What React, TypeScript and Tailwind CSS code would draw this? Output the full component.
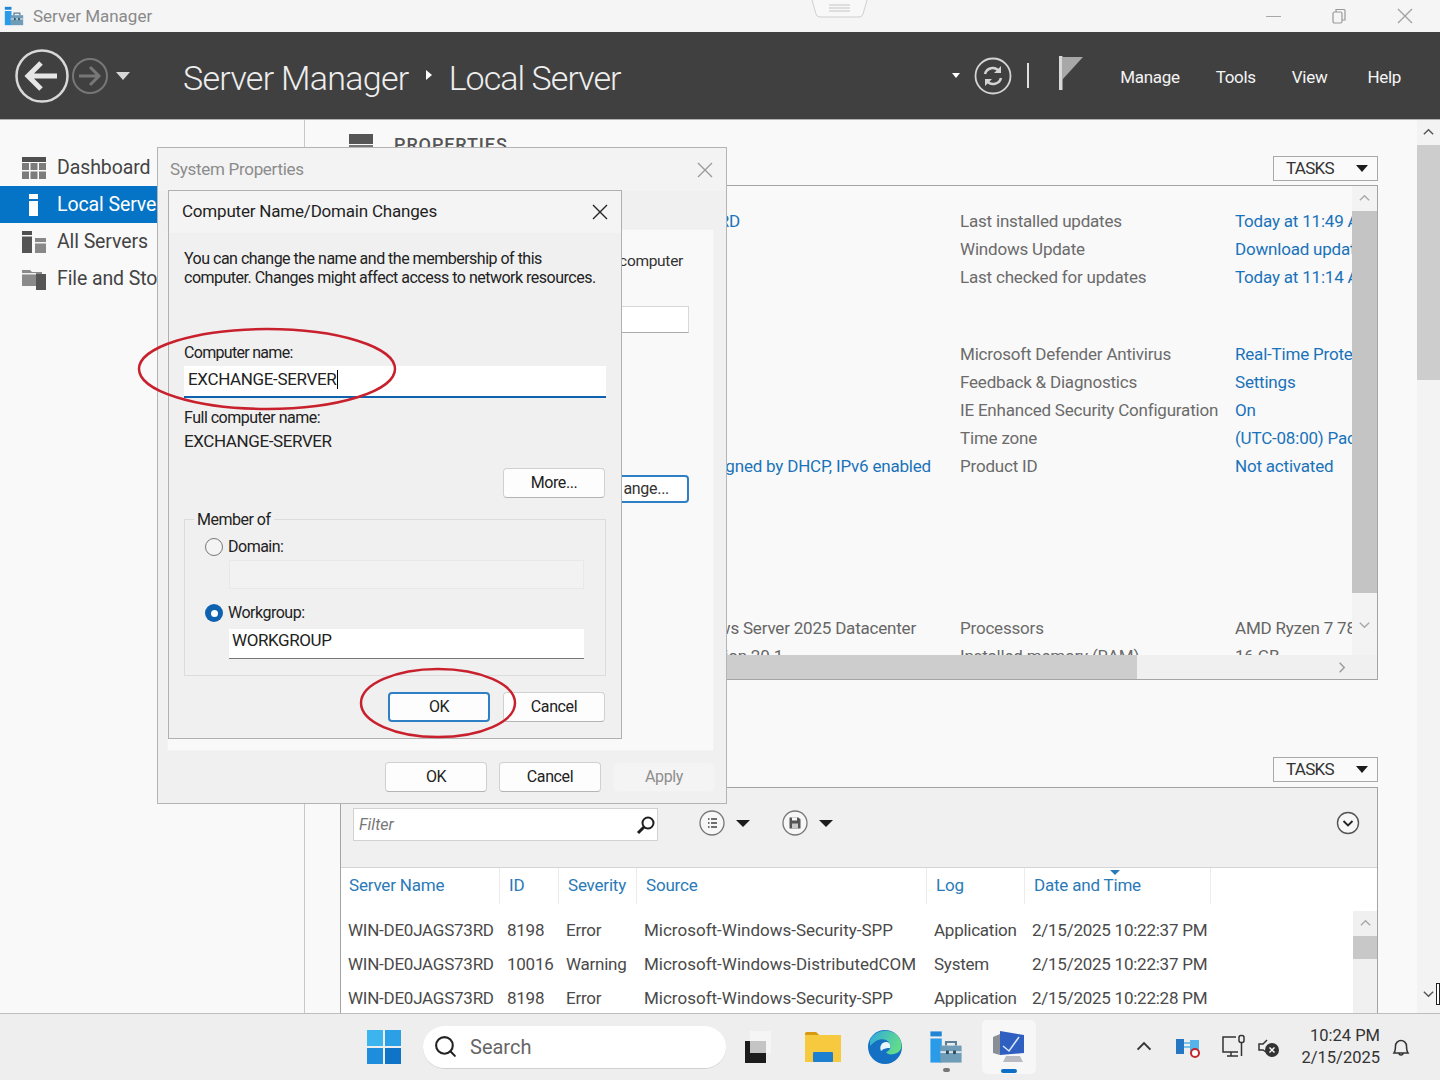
import { Search } from "lucide-react";

type Row = { label: string; value: string; left?: string; leftBox?: string; plain?: boolean };

const updates: Row[] = [
  { label: "Last installed updates", value: "Today at 11:49 AM", left: "WIN-DE0JAGS73RD", leftBox: "w-[49px]" },
  { label: "Windows Update", value: "Download updates only" },
  { label: "Last checked for updates", value: "Today at 11:14 AM" },
];

const security: Row[] = [
  { label: "Microsoft Defender Antivirus", value: "Real-Time Protection" },
  { label: "Feedback & Diagnostics", value: "Settings" },
  { label: "IE Enhanced Security Configuration", value: "On" },
  { label: "Time zone", value: "(UTC-08:00) Pacific Time" },
  { label: "Product ID", value: "Not activated", left: "Assigned by DHCP, IPv6 enabled", leftBox: "w-[240px]" },
];

const hardware: Row[] = [
  { label: "Processors", value: "AMD Ryzen 7 7800X3D", left: "Windows Server 2025 Datacenter", leftBox: "w-[225px]", plain: true },
  { label: "Installed memory (RAM)", value: "16 GB", left: "Version 20.1", plain: true },
];

const events = [
  ["WIN-DE0JAGS73RD", "8198", "Error", "Microsoft-Windows-Security-SPP", "Application", "2/15/2025 10:22:37 PM"],
  ["WIN-DE0JAGS73RD", "10016", "Warning", "Microsoft-Windows-DistributedCOM", "System", "2/15/2025 10:22:37 PM"],
  ["WIN-DE0JAGS73RD", "8198", "Error", "Microsoft-Windows-Security-SPP", "Application", "2/15/2025 10:22:28 PM"],
];

const columns = ["Server Name", "ID", "Severity", "Source", "Log", "Date and Time"];

function ServerManagerIcon({ className }: { className?: string }) {
  return (
    <svg viewBox="0 0 24 24" className={className}>
      <rect x="1" y="1" width="8" height="3.5" fill="#1f86d6" />
      <rect x="1" y="6" width="8" height="17" fill="#2a9be8" />
      <rect x="8" y="11" width="15" height="12" fill="#6f9db8" />
      <path d="M12 11V8.5h7V11" fill="none" stroke="#5b7f96" strokeWidth="1.5" />
      <rect x="8" y="15" width="15" height="1.2" fill="#dfe9ef" />
      <rect x="12" y="14.5" width="2" height="2.5" fill="#2f4a5c" />
      <rect x="17" y="14.5" width="2" height="2.5" fill="#2f4a5c" />
    </svg>
  );
}

function DialogButton({ label, variant = "normal" }: { label: string; variant?: "normal" | "focused" | "disabled" }) {
  const look =
    variant === "focused"
      ? "border-2 border-[#2f7fc4] bg-[#fdfdfd] text-[#222]"
      : variant === "disabled"
        ? "border border-[#f1f1f1] bg-[#f4f4f4] text-[#8e8e8e]"
        : "border border-[#d0d0d0] border-b-[#b4b4b4] bg-[#fdfdfd] text-[#222]";
  return (
    <div className={`flex h-[30px] w-[102px] items-center justify-center rounded-[4px] text-[16px] tracking-[-0.4px] ${look}`}>
      {label}
    </div>
  );
}

function TasksButton() {
  return (
    <div className="flex h-[25px] w-[105px] items-center justify-between border border-[#a9a9a9] bg-[#fafafa] pl-[12px] pr-[9px] text-[17px] tracking-[-0.7px] text-[#333]">
      TASKS
      <span className="h-0 w-0 border-x-[6px] border-t-[7px] border-x-transparent border-t-[#1c1c1c]" />
    </div>
  );
}

function Chevron({ dir, className = "" }: { dir: "up" | "down" | "right"; className?: string }) {
  const d = dir === "up" ? "M2 9l5-5 5 5" : dir === "down" ? "M2 5l5 5 5-5" : "M5 2l5 5-5 5";
  return (
    <svg viewBox="0 0 14 14" className={`h-[13px] w-[13px] ${className}`}>
      <path d={d} fill="none" stroke="currentColor" strokeWidth="1.5" />
    </svg>
  );
}

function PropertyRow({ row }: { row: Row }) {
  return (
    <div className="flex h-[28px] w-max items-center whitespace-nowrap text-[17px] tracking-[-0.2px]">
      <div className={`w-[269px] shrink-0 ${row.plain ? "text-[#666]" : "text-[#1a73ba]"}`}>
        {row.leftBox ? <div className={`flex justify-end ${row.leftBox}`}>{row.left}</div> : row.left}
      </div>
      <div className="w-[275px] shrink-0 text-[#6b6b6b]">{row.label}</div>
      <div className={row.plain ? "text-[#666]" : "text-[#1a73ba]"}>{row.value}</div>
    </div>
  );
}

function PropertiesPanel() {
  return (
    <div className="flex h-[495px] flex-col border border-[#a4a4a4] bg-[#f9f9f9]">
      <div className="flex min-h-0 flex-1">
        <div className="min-w-0 flex-1 overflow-hidden pl-[350px] pt-[22px]">
          {updates.map((row) => (
            <PropertyRow key={row.label} row={row} />
          ))}
          <div className="mt-[49px]">
            {security.map((row) => (
              <PropertyRow key={row.label} row={row} />
            ))}
          </div>
          <div className="mt-[134px]">
            {hardware.map((row) => (
              <PropertyRow key={row.label} row={row} />
            ))}
          </div>
        </div>
        <div className="flex w-[25px] shrink-0 flex-col items-center bg-[#f3f3f3] text-[#a8a8a8]">
          <div className="flex h-[25px] items-center">
            <Chevron dir="up" />
          </div>
          <div className="h-[382px] w-full bg-[#c4c4c4]" />
          <div className="flex flex-1 items-center">
            <Chevron dir="down" />
          </div>
        </div>
      </div>
      <div className="flex h-[24px] bg-[#f0f0f0]">
        <div className="w-[796px] bg-[#cdcdcd]" />
        <div className="flex flex-1 items-center justify-end pr-[29px] text-[#9a9a9a]">
          <Chevron dir="right" />
        </div>
      </div>
    </div>
  );
}

function CircleIcon({ children }: { children: React.ReactNode }) {
  return (
    <svg viewBox="0 0 26 26" className="h-[26px] w-[26px]">
      <circle cx="13" cy="13" r="12" fill="#f7f7f7" stroke="#777" strokeWidth="1.3" />
      {children}
    </svg>
  );
}

function EventsPanel() {
  return (
    <div className="h-[300px] overflow-hidden border border-[#a4a4a4] bg-white">
      <div className="flex h-[80px] items-start border-b border-[#d4d4d4] bg-[#f0f0f0] pl-[12px] pr-[17px] pt-[20px]">
        <div className="flex h-[33px] w-[305px] items-center justify-between border border-[#d2d2d2] bg-white pl-[5px] pr-px text-[16px] italic text-[#777]">
          Filter
          <svg viewBox="0 0 20 20" className="h-[20px] w-[20px]">
            <circle cx="12" cy="8" r="5.5" fill="none" stroke="#1d1d1d" strokeWidth="2" />
            <path d="M8 12l-6 6" stroke="#1d1d1d" strokeWidth="3" />
          </svg>
        </div>
        <div className="ml-[41px] flex h-[30px] items-center gap-[11px]">
          <CircleIcon>
            <path d="M9 9h1.5M9 13h1.5M9 17h1.5M12 9h6M12 13h6M12 17h6" stroke="#444" strokeWidth="1.7" />
          </CircleIcon>
          <span className="h-0 w-0 border-x-[7px] border-t-[7px] border-x-transparent border-t-[#1c1c1c]" />
        </div>
        <div className="ml-[32px] flex h-[30px] items-center gap-[11px]">
          <CircleIcon>
            <path d="M7.500 7.500h9l2 2v9h-11z" fill="#555" />
            <rect x="10" y="7.500" width="5" height="3" fill="#f7f7f7" />
            <rect x="10" y="13.500" width="6" height="5" fill="#c8c8c8" />
          </CircleIcon>
          <span className="h-0 w-0 border-x-[7px] border-t-[7px] border-x-transparent border-t-[#1c1c1c]" />
        </div>
        <div className="ml-auto mt-[3px]">
          <svg viewBox="0 0 24 24" className="h-[24px] w-[24px]">
            <circle cx="12" cy="12" r="10.5" fill="#f7f7f7" stroke="#555" strokeWidth="1.4" />
            <path d="M7.5 10l4.5 4.500 4.500-4.500" fill="none" stroke="#222" strokeWidth="1.8" />
          </svg>
        </div>
      </div>
      <div className="flex">
        <div className="w-[1012px] shrink-0">
          <div className="grid h-[46px] grid-cols-[159px_59px_78px_290px_98px_186px] items-start text-[17px] tracking-[-0.2px] text-[#2a7ab8]">
            {columns.map((col) => (
              <div key={col} className="relative flex h-[36px] items-center border-r border-[#ececec] pl-[9px] first:pl-[8px]">
                {col}
                {col === "Date and Time" && (
                  <span className="absolute left-[85px] top-[2px] h-0 w-0 border-x-[5px] border-t-[5px] border-x-transparent border-t-[#2a7ab8]" />
                )}
              </div>
            ))}
          </div>
          {events.map((row, i) => (
            <div
              key={i}
              className="grid h-[34px] grid-cols-[159px_59px_78px_290px_98px_186px] items-center whitespace-nowrap text-[17px] tracking-[-0.25px] text-[#4a4a4a]"
            >
              {row.map((cell, j) => (
                <div key={j} className={j === 3 ? "pl-[7px] tracking-[0px]" : "pl-[7px]"}>
                  {cell}
                </div>
              ))}
            </div>
          ))}
        </div>
        <div className="mt-[43px] flex w-[25px] shrink-0 flex-col items-center bg-[#f0f0f0] text-[#a8a8a8]">
          <div className="flex h-[25px] items-center">
            <Chevron dir="up" />
          </div>
          <div className="h-[23px] w-full bg-[#c8c8c8]" />
          <div className="h-[80px]" />
        </div>
      </div>
    </div>
  );
}

function ComputerNameDialog() {
  return (
    <div className="absolute left-[168px] top-[190px] h-[549px] w-[454px] border border-[#b0b0b0] bg-[#f0f0f0] text-[#222]">
      <div className="flex h-[42px] items-center justify-between bg-[#f4f4f4] pl-[13px] pr-[13px] text-[17px] tracking-[-0.2px] text-[#1f1f1f]">
        Computer Name/Domain Changes
        <svg viewBox="0 0 16 16" className="h-[16px] w-[16px]">
          <path d="M1 1l14 14M15 1L1 15" stroke="#222" strokeWidth="1.4" />
        </svg>
      </div>
      <div className="pl-[15px] pr-[15px] pt-[16px] text-[16px] tracking-[-0.5px]">
        <div className="leading-[19px]">
          <div>You can change the name and the membership of this</div>
          <div>computer. Changes might affect access to network resources.</div>
        </div>
        <div className="mt-[56px] leading-[20px] tracking-[-0.7px]">Computer name:</div>
        <div className="mt-[3px] flex h-[32px] items-center border-b-2 border-[#0f62b0] bg-white pb-[3px] pl-[4px] text-[17px] tracking-[-0.35px]">
          EXCHANGE-SERVER
          <span className="ml-[1px] h-[19px] w-px bg-black" />
        </div>
        <div className="mt-[10px] leading-[20px]">Full computer name:</div>
        <div className="mt-[3px] text-[17px] leading-[20px] tracking-[-0.4px]">EXCHANGE-SERVER</div>
        <div className="mt-[17px] flex justify-end pr-px">
          <DialogButton label="More..." />
        </div>
        <div className="relative mt-[21px] h-[157px] border border-[#dcdcdc] pl-[20px] pt-[15px]">
          <div className="absolute left-[9px] top-[-10px] bg-[#f0f0f0] px-[3px] leading-[20px]">Member of</div>
          <div className="flex h-[24px] items-center">
            <span className="h-[18px] w-[18px] rounded-full border border-[#777] bg-[#f4f4f4]" />
            <span className="ml-[5px]">Domain:</span>
          </div>
          <div className="ml-[24px] mt-[1px] h-[29px] w-[355px] border border-[#e8e8e8] bg-[#f2f2f2]" />
          <div className="mt-[12px] flex h-[24px] items-center">
            <span className="flex h-[18px] w-[18px] items-center justify-center rounded-full bg-[#0f62b0]">
              <span className="h-[7px] w-[7px] rounded-full bg-white" />
            </span>
            <span className="ml-[5px]">Workgroup:</span>
          </div>
          <div className="ml-[24px] mt-[4px] flex h-[30px] w-[355px] items-center border-b border-[#777] bg-white pb-[6px] pl-[3px] text-[17px] tracking-[-0.4px]">
            WORKGROUP
          </div>
        </div>
        <div className="mt-[16px] flex justify-end gap-[12px] pr-px">
          <div className="w-[103px]">
            <DialogButton label="OK" variant="focused" />
          </div>
          <DialogButton label="Cancel" />
        </div>
      </div>
    </div>
  );
}

function SystemPropertiesDialog() {
  return (
    <div className="absolute left-[157px] top-[147px] flex h-[657px] w-[570px] flex-col border border-[#b4b4b4] bg-[#f0f0f0]">
      <div className="flex h-[43px] items-center justify-between bg-[#f3f3f3] pl-[12px] pr-[13px] text-[17px] tracking-[-0.3px] text-[#8c8c8c]">
        System Properties
        <svg viewBox="0 0 16 16" className="h-[16px] w-[16px]">
          <path d="M1 1l14 14M15 1L1 15" stroke="#999" strokeWidth="1.3" />
        </svg>
      </div>
      <div className="relative ml-[9px] mr-[12px] mt-[38px] h-[522px] border border-[#f3f3f3] bg-[#f9f9f9] text-[15.5px] tracking-[-0.3px] text-[#333]">
        <div className="flex justify-end pr-[30px] pt-[20px]">computer</div>
        <div className="ml-auto mr-[24px] mt-[33px] h-[27px] w-[80px] border border-[#d8d8d8] border-b-[#aaa] bg-white" />
        <div className="ml-auto mr-[24px] mt-[142px] flex h-[28px] w-[80px] items-center justify-end rounded-[4px] border-2 border-[#2f7fc4] bg-white pr-[18px] text-[16px]">
          ange...
        </div>
      </div>
      <div className="flex justify-end gap-[12px] pr-[11px] pt-[11px]">
        <DialogButton label="OK" />
        <DialogButton label="Cancel" />
        <DialogButton label="Apply" variant="disabled" />
      </div>
    </div>
  );
}

function TrayIcons() {
  return (
    <div className="ml-auto flex items-center text-[#333]">
      <Chevron dir="up" className="h-[18px] w-[18px]" />
      <svg viewBox="0 0 26 24" className="ml-[22px] h-[24px] w-[26px]">
        <rect x="1" y="4" width="8" height="15" fill="#2577c4" />
        <rect x="15" y="5" width="9" height="11" fill="#56b4ea" />
        <path d="M9 8h6M9 12h6" stroke="#56b4ea" strokeWidth="1.5" />
        <circle cx="20" cy="18" r="4" fill="#fff" stroke="#c1272d" strokeWidth="2" />
      </svg>
      <svg viewBox="0 0 26 26" className="ml-[20px] h-[26px] w-[26px]" fill="none" stroke="#333" strokeWidth="1.5">
        <path d="M15 3H2v15h15M6 22h11M10 18v4" />
        <rect x="18" y="1.5" width="5" height="7" rx="2" />
        <path d="M20.5 8.5V22" />
      </svg>
      <svg viewBox="0 0 24 24" className="ml-[10px] h-[24px] w-[24px]">
        <path d="M10 5L6 9H2v6h4l3 2" fill="none" stroke="#333" strokeWidth="1.5" />
        <circle cx="15" cy="15" r="7" fill="#333" />
        <path d="M12.5 12.5l5 5M17.5 12.5l-5 5" stroke="#fff" strokeWidth="1.4" />
      </svg>
      <div className="ml-[20px] text-right text-[16.5px] leading-[22px] text-[#333]">
        <div>10:24 PM</div>
        <div>2/15/2025</div>
      </div>
      <svg viewBox="0 0 24 24" className="ml-[9px] h-[24px] w-[24px]" fill="none" stroke="#333" strokeWidth="1.5">
        <path d="M5 18c1.5-2 1.5-4 1.5-7a5.5 5.5 0 0 1 11 0c0 3 0 5 1.5 7zM10 18a2 2 0 0 0 4 0" />
      </svg>
    </div>
  );
}

function Taskbar() {
  return (
    <div className="flex h-[67px] items-center border-t border-[#bdbdbd] bg-[#eeeeee] pl-[367px] pr-[27px]">
      <svg viewBox="0 0 34 34" className="h-[34px] w-[34px]">
        <rect width="16" height="16" fill="#3cb4ee" />
        <rect x="18" width="16" height="16" fill="#2ba0e6" />
        <rect y="18" width="16" height="16" fill="#1e8ddb" />
        <rect x="18" y="18" width="16" height="16" fill="#0f74c8" />
      </svg>
      <div className="ml-[22px] flex h-[43px] w-[303px] items-center rounded-full border-b border-[#d0d0d0] bg-white pl-[10px] text-[20px] text-[#666]">
        <Search className="h-[25px] w-[25px] text-[#222]" strokeWidth={2} />
        <span className="ml-[12px]">Search</span>
      </div>
      <svg viewBox="0 0 28 34" className="ml-[18px] h-[34px] w-[28px]">
        <rect x="6" y="1" width="21" height="22" fill="#f5f5f5" />
        <rect x="1" y="11" width="21" height="22" fill="#1c1c1c" />
        <rect x="6" y="11" width="16" height="12" fill="#c4c4c4" />
      </svg>
      <svg viewBox="0 0 36 32" className="ml-[33px] h-[32px] w-[36px]">
        <path d="M0 3a2 2 0 0 1 2-2h9l3 3h22v27H0z" fill="#f7c93e" />
        <path d="M0 3a2 2 0 0 1 2-2h9l3 3H0z" fill="#d89a12" />
        <rect x="8" y="21" width="20" height="10" rx="1" fill="#1c7fd0" />
      </svg>
      <svg viewBox="0 0 34 34" className="ml-[27px] h-[34px] w-[34px]">
        <defs>
          <linearGradient id="edgeTop" x1="0" y1="0" x2="1" y2="0.4">
            <stop offset="0" stopColor="#2fa8e0" />
            <stop offset="1" stopColor="#62dc8a" />
          </linearGradient>
        </defs>
        <circle cx="17" cy="17" r="17" fill="#1470c2" />
        <path d="M2 10C8-2 29-3 33 12c2 7-2 11-7 12-4 1-7 0-8-2 4-1 5-5 4-8-2-5-9-6-14-3-2 1-4 3-6 5z" fill="url(#edgeTop)" />
        <path d="M13 21c-2-5 1-9 5-9 3 0 5 2 4 6-3 0-6 0-9 3z" fill="#e6f6fb" />
      </svg>
      <div className="relative ml-[27px] flex h-[34px] w-[34px] justify-center">
        <ServerManagerIcon className="h-[34px] w-[34px]" />
        <span className="absolute top-[38px] h-[4px] w-[7px] rounded-full bg-[#777]" />
      </div>
      <div className="relative ml-[19px] flex h-[54px] w-[54px] items-center justify-center rounded-[5px] bg-[#f7f7f7]">
        <svg viewBox="0 0 34 36" className="h-[36px] w-[34px]">
          <path d="M1 8l7-3v21l-7-2z" fill="#8a8f96" />
          <path d="M8 2l24 4v18L8 26z" fill="#2f5fc0" />
          <path d="M11 17l6 5 10-14" fill="none" stroke="#dbe8fb" strokeWidth="1.5" />
          <path d="M14 27h14l3 6H11z" fill="#b8bcc2" />
        </svg>
        <span className="absolute bottom-[1px] h-[4px] w-[16px] rounded-full bg-[#0f6fc6]" />
      </div>
      <TrayIcons />
    </div>
  );
}

function Header() {
  return (
    <div className="flex h-[88px] items-center border-b border-[#b0b0b0] bg-[#404040] pl-[15px] pr-[39px] text-white">
      <svg viewBox="0 0 54 54" className="h-[54px] w-[54px]">
        <circle cx="27" cy="27" r="25.5" fill="none" stroke="#d8d8d8" strokeWidth="2.5" />
        <path d="M42 27H14M26 14L13 27l13 13" fill="none" stroke="#e6e6e6" strokeWidth="5" />
      </svg>
      <svg viewBox="0 0 36 36" className="ml-[3px] h-[36px] w-[36px]">
        <circle cx="18" cy="18" r="17" fill="none" stroke="#777" strokeWidth="2" />
        <path d="M7 18h20M18 9l9 9-9 9" fill="none" stroke="#777" strokeWidth="3" />
      </svg>
      <span className="ml-[8px] h-0 w-0 border-x-[7px] border-t-[8px] border-x-transparent border-t-[#d8d8d8]" />
      <div className="ml-[53px] mt-[5px] flex items-center text-[34px] font-light tracking-[-0.7px] text-[#eeeeee]">
        Server Manager
        <span className="mx-[17px] mb-[6px] h-0 w-0 border-y-[5px] border-l-[6px] border-y-transparent border-l-white" />
        <span className="tracking-[-0.95px]">Local Server</span>
      </div>
      <div className="ml-auto flex items-center">
        <span className="h-0 w-0 border-x-[4.5px] border-t-[5px] border-x-transparent border-t-white" />
        <svg viewBox="0 0 38 38" className="ml-[14px] h-[38px] w-[38px]">
          <circle cx="19" cy="19" r="17.5" fill="none" stroke="#d4d4d4" strokeWidth="1.8" />
          <path d="M11 17a8 8 0 0 1 14-3M27 21a8 8 0 0 1-14 3" fill="none" stroke="#d4d4d4" strokeWidth="2.5" />
          <path d="M27 9v7h-7zM11 29v-7h7z" fill="#d4d4d4" />
        </svg>
        <span className="ml-[15px] h-[25px] w-[2px] bg-[#e0e0e0]" />
        <svg viewBox="0 0 26 34" className="mb-[6px] ml-[29px] h-[34px] w-[26px]">
          <rect x="1" y="0" width="3.5" height="34" fill="#d8d8d8" />
          <path d="M4 1h21L4 24z" fill="#a8a8a8" />
        </svg>
        <div className="ml-[36px] mt-[5px] flex gap-[36px] text-[17px] tracking-[-0.3px] text-[#f4f4f4]">
          <span>Manage</span>
          <span>Tools</span>
          <span>View</span>
          <span className="ml-[4px]">Help</span>
        </div>
      </div>
    </div>
  );
}

function TitleBar() {
  return (
    <div className="relative flex h-[32px] items-center bg-[#f5f5f5] pl-[4px] pr-[27px] text-[17px] text-[#8a8a8a]">
      <ServerManagerIcon className="h-[20px] w-[20px]" />
      <span className="ml-[9px] mt-[2px]">Server Manager</span>
      <div className="absolute left-[811px] top-0">
        <svg viewBox="0 0 57 18" className="h-[18px] w-[57px]">
          <path d="M1 0l4 14q1 3 4 3h39q3 0 4-3l4-14" fill="#f8f8f8" stroke="#cfcfcf" />
          <path d="M18 5h21M18 8h21M18 11h21" stroke="#c4c4c4" />
        </svg>
      </div>
      <div className="ml-auto flex items-center gap-[50px] text-[#a0a0a0]">
        <span className="h-px w-[15px] bg-[#a8a8a8]" />
        <svg viewBox="0 0 16 16" className="h-[16px] w-[16px]" fill="none" stroke="#999" strokeWidth="1.2">
          <rect x="2" y="4" width="9" height="11" rx="1.5" />
          <path d="M5 4V1.5h8a1 1 0 0 1 1 1V12h-3" />
        </svg>
        <svg viewBox="0 0 16 16" className="h-[16px] w-[16px]">
          <path d="M1 1l14 14M15 1L1 15" stroke="#a0a0a0" strokeWidth="1.3" />
        </svg>
      </div>
    </div>
  );
}

function SidebarItem({ label, active, icon }: { label: string; active?: boolean; icon: React.ReactNode }) {
  return (
    <div
      className={`flex h-[37px] items-center pl-[22px] text-[19.5px] tracking-[-0.1px] ${
        active ? "bg-[#0574c6] text-white" : "text-[#444]"
      }`}
    >
      <span className="flex w-[35px] shrink-0">{icon}</span>
      <span className="whitespace-nowrap">{label}</span>
    </div>
  );
}

function Sidebar() {
  return (
    <div className="w-[305px] shrink-0 border-r border-[#c8c8c8] bg-[#f9f9f9] pt-[29px]">
      <SidebarItem
        label="Dashboard"
        icon={
          <svg viewBox="0 0 24 22" className="h-[22px] w-[24px]">
            <rect width="24" height="5" fill="#505050" />
            <path d="M0 6h7v7H0zM8.500 6h7v7h-7zM17 6h7v7h-7zM0 14.500h7V22H0zM8.500 14.500h7V22h-7zM17 14.500h7V22h-7z" fill="#7c7c7c" />
          </svg>
        }
      />
      <SidebarItem
        label="Local Server"
        active
        icon={
          <svg viewBox="0 0 24 24" className="h-[24px] w-[24px]">
            <rect x="7" y="1" width="9" height="5" fill="#fff" />
            <rect x="7" y="8" width="9" height="15" fill="#fff" />
          </svg>
        }
      />
      <SidebarItem
        label="All Servers"
        icon={
          <svg viewBox="0 0 24 22" className="h-[22px] w-[24px]">
            <rect width="10" height="4" fill="#505050" />
            <rect y="5.500" width="10" height="16.500" fill="#555" />
            <rect x="13" y="7" width="11" height="15" fill="#888" />
            <rect x="13" y="11" width="11" height="1.500" fill="#f2f2f2" />
          </svg>
        }
      />
      <SidebarItem
        label="File and Storage Services"
        icon={
          <svg viewBox="0 0 24 22" className="h-[22px] w-[24px]">
            <path d="M0 2h8l2 2h10v14H0z" fill="#8a8a8a" />
            <path d="M14 6h10v16H14z" fill="#555" />
            <path d="M0 5h14v1.500H0z" fill="#eee" />
          </svg>
        }
      />
    </div>
  );
}

function MainArea() {
  return (
    <div className="flex min-w-0 flex-1">
      <div className="min-w-0 flex-1 overflow-hidden pl-[35px] pr-[39px] pt-[11px]">
        <div className="flex h-[54px] items-start justify-between">
          <div className="ml-[9px] flex items-center">
            <svg viewBox="0 0 24 18" className="mb-[4px] h-[18px] w-[24px]">
              <rect width="24" height="10" fill="#555" />
              <rect y="11" width="24" height="3" fill="#777" />
              <rect y="15" width="24" height="3" fill="#999" />
            </svg>
            <span className="ml-[21px] text-[18px] font-medium tracking-[0.9px] text-[#555]">PROPERTIES</span>
          </div>
          <div className="mt-[25px]">
            <TasksButton />
          </div>
        </div>
        <PropertiesPanel />
        <div className="mt-[77px] flex justify-end">
          <TasksButton />
        </div>
        <div className="mt-[5px]">
          <EventsPanel />
        </div>
      </div>
      <div className="relative flex w-[23px] shrink-0 flex-col items-center bg-[#f3f3f3] text-[#555]">
        <div className="flex h-[25px] items-center">
          <Chevron dir="up" />
        </div>
        <div className="h-[235px] w-full bg-[#cdcdcd]" />
        <div className="mt-auto flex h-[26px] items-start">
          <Chevron dir="down" />
        </div>
        <span className="absolute bottom-[8px] right-[0px] h-[22px] w-[4px] border border-[#222] bg-white" />
      </div>
    </div>
  );
}

export default function App() {
  return (
    <div className="relative flex h-[1080px] w-[1440px] flex-col overflow-hidden bg-[#f9f9f9] font-['Roboto',sans-serif]">
      <TitleBar />
      <Header />
      <div className="flex min-h-0 flex-1">
        <Sidebar />
        <MainArea />
      </div>
      <Taskbar />
      <SystemPropertiesDialog />
      <ComputerNameDialog />
      <svg viewBox="0 0 1440 1080" className="pointer-events-none absolute left-0 top-0 h-[1080px] w-[1440px]">
        <ellipse cx="267" cy="369" rx="128" ry="40" fill="none" stroke="#c8202c" strokeWidth="2.5" />
        <ellipse cx="438" cy="703" rx="77" ry="34" fill="none" stroke="#c8202c" strokeWidth="2.5" />
      </svg>
    </div>
  );
}
